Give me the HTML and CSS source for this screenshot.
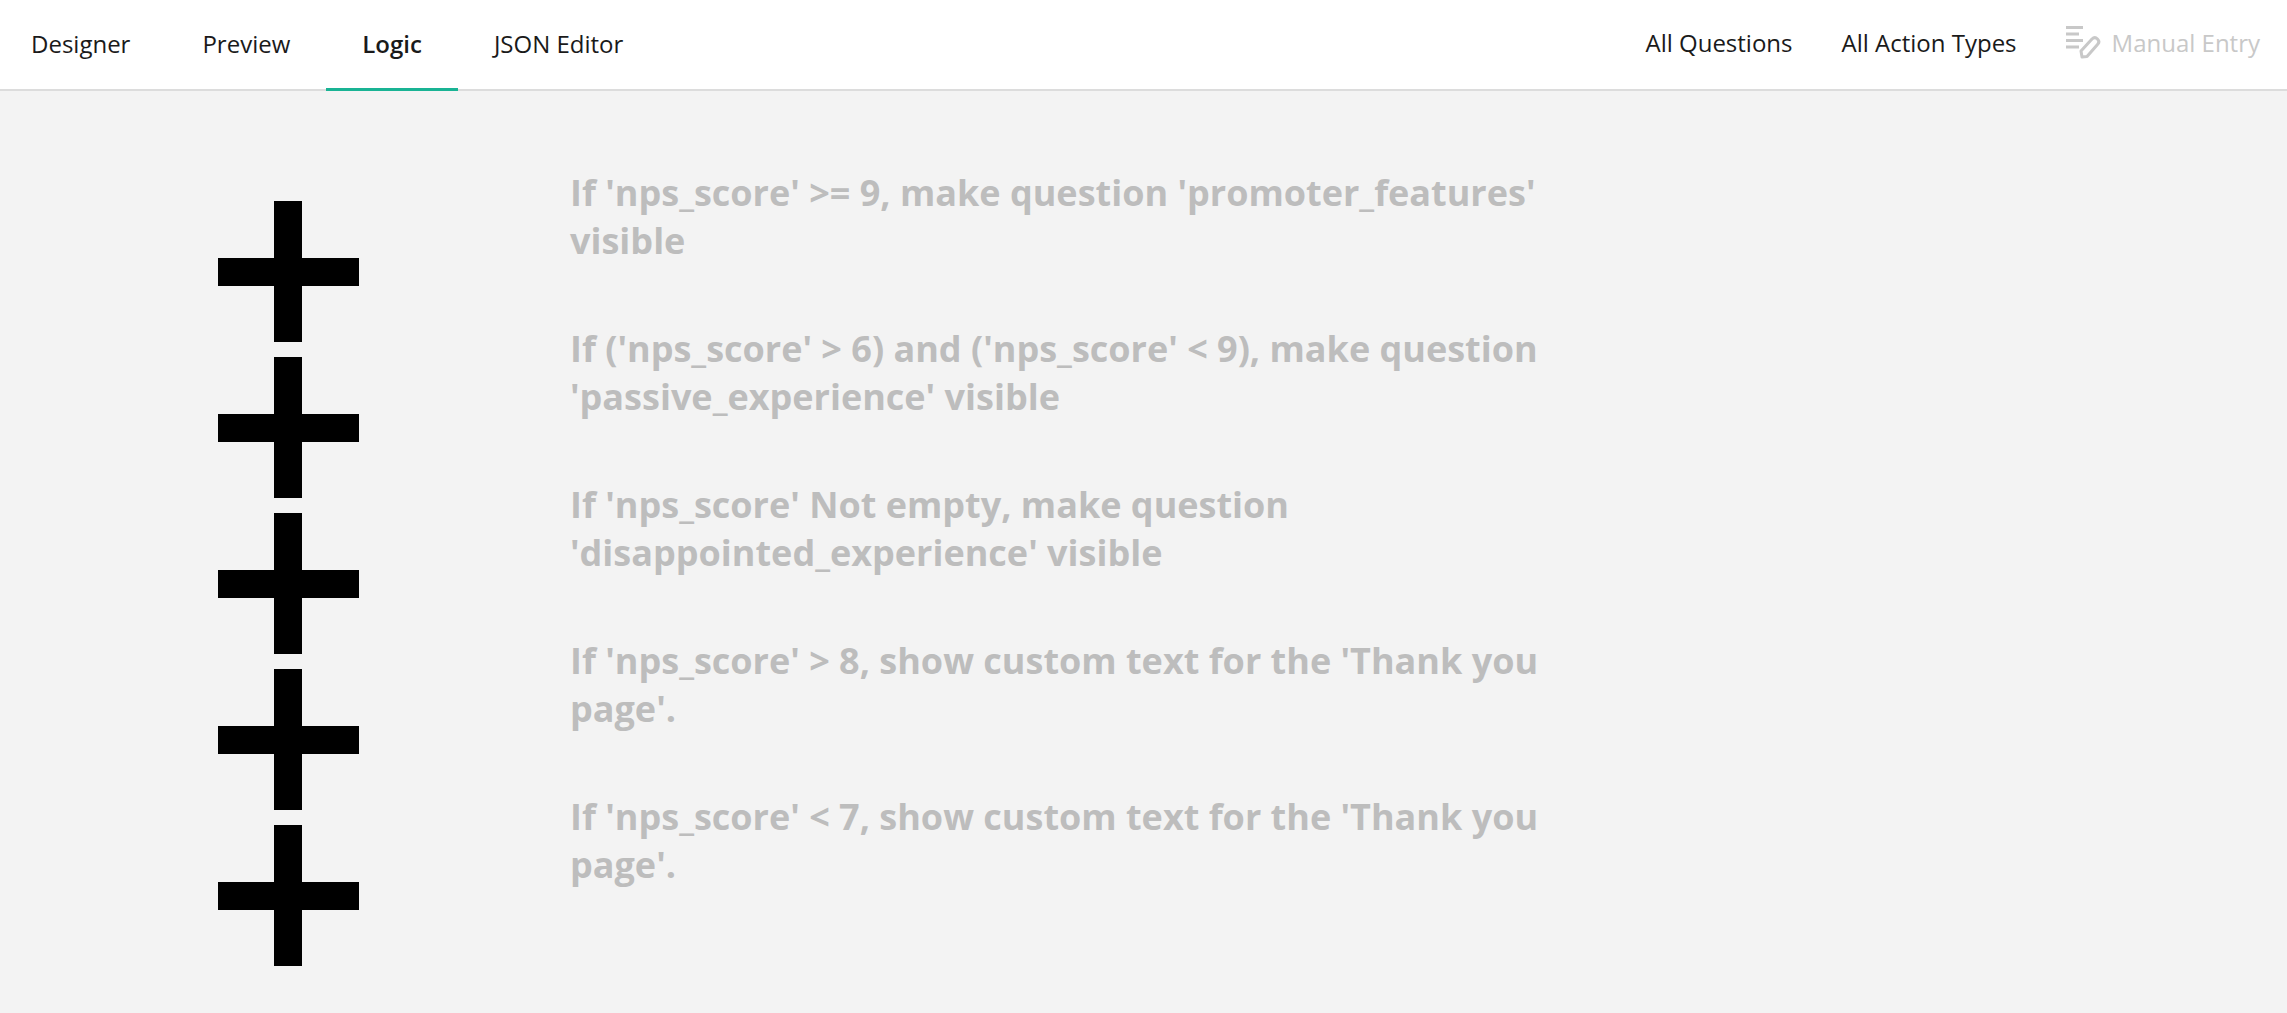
FILE: index.html
```html
<!DOCTYPE html>
<html lang="en">
<head>
  <meta charset="UTF-8" />
  <meta name="viewport" content="width=device-width, initial-scale=1.0" />
  <title>Logic</title>
  <link rel="stylesheet" href="styles.css">
</head>
<body>
  <header class="topbar">
    <nav class="tabs">
      <a class="tab">Designer</a>
      <a class="tab">Preview</a>
      <a class="tab active">Logic</a>
      <a class="tab">JSON Editor</a>
    </nav>
    <div class="filters">
      <a class="filter">All Questions</a>
      <a class="filter">All Action Types</a>
      <a class="manual">
        <svg class="manual-icon" viewBox="0 0 36 36" aria-hidden="true">
          <path d="M1 3.5h17M1 10h13M1 16.500h17M1 23h13" fill="none" stroke="#c8c8c8" stroke-width="3" />
          <path d="M17 33l-1-6L27 15c2-2 3.500-2 5.500 0s2 3.500 0 5.500L22 32.500z" fill="none" stroke="#c8c8c8" stroke-width="3" stroke-linejoin="round" />
        </svg>
        Manual Entry
      </a>
    </div>
  </header>

  <main class="rules">
    <div class="rule">
      <div class="plus"></div>
      <p class="rule-text">If 'nps_score' &gt;= 9, make question 'promoter_features' visible</p>
    </div>
    <div class="rule">
      <div class="plus"></div>
      <p class="rule-text">If ('nps_score' &gt; 6) and ('nps_score' &lt; 9), make question 'passive_experience' visible</p>
    </div>
    <div class="rule">
      <div class="plus"></div>
      <p class="rule-text">If 'nps_score' Not empty, make question 'disappointed_experience' visible</p>
    </div>
    <div class="rule">
      <div class="plus"></div>
      <p class="rule-text">If 'nps_score' &gt; 8, show custom text for the 'Thank you page'.</p>
    </div>
    <div class="rule">
      <div class="plus"></div>
      <p class="rule-text">If 'nps_score' &lt; 7, show custom text for the 'Thank you page'.</p>
    </div>
  </main>
</body>
</html>
```

FILE: styles.css
```css
* {
  box-sizing: border-box;
}
html, body {
  height: 100%;
}
body {
  margin: 0;
  background-color: #f3f3f3;
  font-family: "Open Sans", sans-serif;
  overflow: hidden;
}
.topbar {
  display: flex;
  justify-content: space-between;
  height: 91px;
  background-color: #fff;
  border-bottom: 2px solid #dcdcdc;
  font-size: 24px;
  color: #1a1a1a;
}
.tabs {
  display: flex;
}
.tab {
  display: flex;
  align-items: center;
  height: 91px;
  padding: 0 36px 5px;
}
.tab:first-child {
  padding-left: 31px;
}
.tab.active {
  font-weight: 600;
  border-bottom: 3px solid #19b394;
  padding-bottom: 2px;
}
.filters {
  display: flex;
  align-items: center;
  padding: 0 27px 5px 0;
}
.filter {
  margin-right: 48px;
}
.filter:first-child {
  margin-right: 49px;
}
.manual {
  display: flex;
  align-items: center;
  gap: 11px;
  color: #c8c8c8;
}
.manual-icon {
  width: 36px;
  height: 36px;
}
.rules {
  padding: 77px 0 0 217.500px;
}
.rule {
  display: flex;
  height: 156px;
}
.plus {
  flex: none;
  width: 141px;
  height: 141px;
  margin-top: 33px;
  background:
    linear-gradient(#000, #000) center / 28px 100% no-repeat,
    linear-gradient(#000, #000) center / 100% 28px no-repeat;
}
.rule-text {
  width: 985px;
  margin: 1px 0 0 211.500px;
  font-size: 36px;
  font-weight: 700;
  line-height: 48px;
  color: #bdbdbd;
}
```
